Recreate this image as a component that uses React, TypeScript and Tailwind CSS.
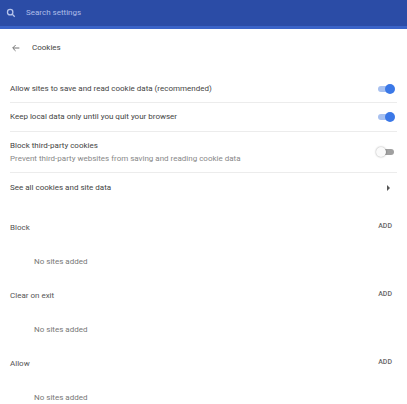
export default function App() {
  const Toggle = ({ on }: { on: boolean }) => (
    <div className="relative w-[16px] h-[10px] mr-[3px]">
      <div className={`absolute top-[2px] left-0 w-[16px] h-[6px] rounded-full ${on ? "bg-[#a8c1f0]" : "bg-[#a0a0a0]"}`} />
      <div className={`absolute top-0 w-[10px] h-[10px] rounded-full ${on ? "left-[7px] bg-[#3b78e7]" : "-left-[2px] bg-[#fafafa] shadow-[0_0_2px_rgba(0,0,0,0.4)]"}`} />
    </div>
  );
  const section = (t: string) => (
    <div>
      <div className="flex justify-between items-center h-[20px] pr-[5px]">
        <span className="text-[8px] text-[#555]">{t}</span>
        <span className="text-[7px] text-[#666] font-medium -mt-[4px]">ADD</span>
      </div>
      <div className="h-[48px] pl-[24px] pt-[18px] text-[8px] text-[#777]">No sites added</div>
    </div>
  );
  return (
    <div className="w-[407px] h-[404px] bg-white overflow-hidden" style={{ fontFamily: "Roboto, 'Liberation Sans', sans-serif" }}>
      <div className="h-[26px] bg-[#2b4ca6] flex items-center border-b-[3px] border-[#3a63c8] box-content">
        <svg width="10" height="10" viewBox="0 0 24 24" className="ml-[6px]" fill="none" stroke="#b8c6ec" strokeWidth="3">
          <circle cx="10" cy="10" r="6.5" /><path d="M15 15l6 6" />
        </svg>
        <span className="ml-[10px] text-[8px] text-[#aebde8]">Search settings</span>
      </div>
      <div className="px-[10px]">
        <div className="flex items-center h-[38px]">
          <svg width="10" height="10" viewBox="0 0 24 24" fill="none" stroke="#666" strokeWidth="2.2" className="ml-[1px]">
            <path d="M20 12H5M11 5l-7 7 7 7" />
          </svg>
          <span className="ml-[11px] text-[8px] text-[#444]">Cookies</span>
        </div>
        <div className="mt-[8px] flex items-center justify-between h-[28px] border-b border-[#ececec] text-[8px] text-[#444]">
          <span>Allow sites to save and read cookie data (recommended)</span><Toggle on />
        </div>
        <div className="flex items-center justify-between h-[29px] border-b border-[#ececec] text-[8px] text-[#444]">
          <span>Keep local data only until you quit your browser</span><Toggle on />
        </div>
        <div className="flex items-center justify-between h-[41px] border-b border-[#ececec] text-[8px]">
          <div className="flex flex-col gap-[1px]">
            <span className="text-[#444]">Block third-party cookies</span>
            <span className="text-[#888]">Prevent third-party websites from saving and reading cookie data</span>
          </div>
          <Toggle on={false} />
        </div>
        <div className="flex items-center justify-between h-[29px] text-[8px] text-[#444]">
          <span>See all cookies and site data</span>
          <span className="w-0 h-0 border-y-[3px] border-y-transparent border-l-[3px] border-l-[#555] mr-[7px]" />
        </div>
        <div className="mt-[16px]">
          {section("Block")}
          {section("Clear on exit")}
          {section("Allow")}
        </div>
      </div>
    </div>
  );
}
